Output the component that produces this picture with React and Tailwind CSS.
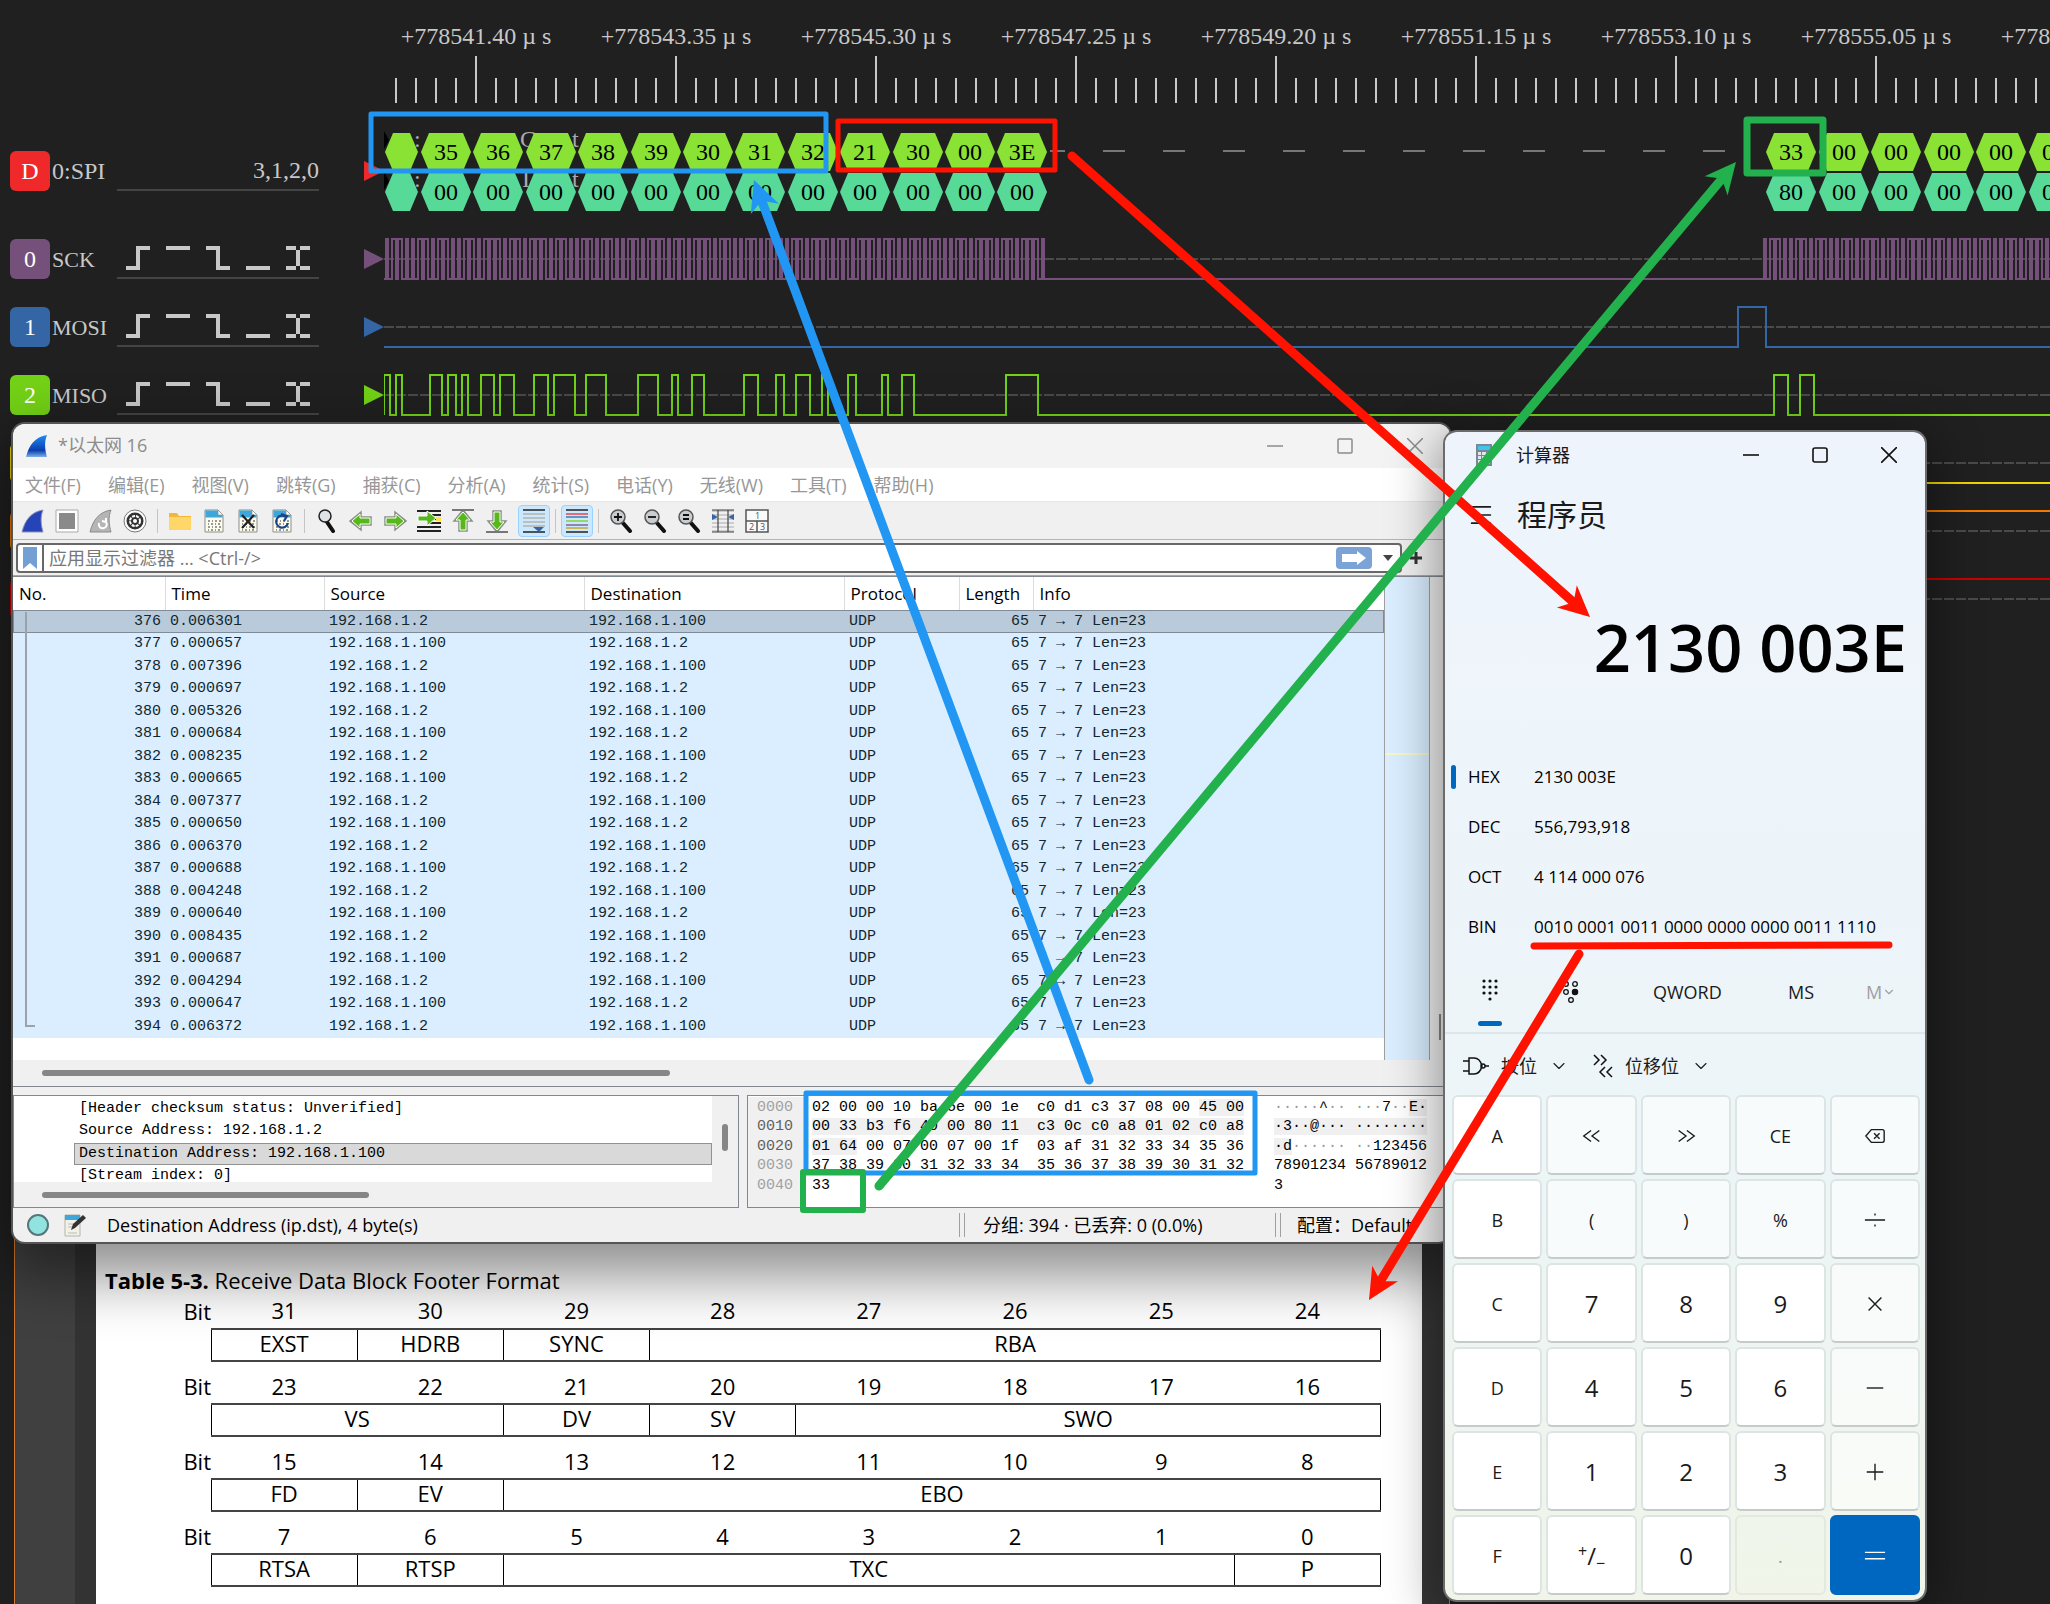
import { Fragment } from 'react';
import { ChevronDown, Menu } from 'lucide-react';

const uiFont = "[font-family:'Open_Sans','Noto_Sans_CJK_SC',sans-serif]";
const monoFont = "[font-family:'Liberation_Mono',monospace]";
const serifFont = "[font-family:'Liberation_Serif','Noto_Sans_CJK_SC',serif]";

// ---------- Logic analyzer ----------

const rulerLabels = ['+778541.40', '+778543.35', '+778545.30', '+778547.25', '+778549.20', '+778551.15', '+778553.10', '+778555.05', '+778557.00'];

const misoPulses = [
  [0, 6], [12, 18], [46, 58], [64, 72], [78, 84], [97, 110], [116, 130], [150, 164], [170, 191], [202, 222],
  [254, 274], [288, 294], [308, 320], [360, 374], [392, 400], [412, 426], [438, 444], [464, 472], [498, 504],
  [518, 530], [622, 654], [1390, 1404], [1416, 1430],
];

// clock edges snap to the 2px sample grid
const clockEdge = (start, k) => start + 2 * Math.floor(k * 1.64 + 0.23);
const clockPulses = (start, count) =>
  Array.from({ length: count }, (_, i) => [clockEdge(start, i * 2), clockEdge(start, i * 2 + 1)]);

const sckPulses = [...clockPulses(2, 101), ...clockPulses(1380, 60)];

const channels = [
  { id: '0', name: 'SCK', badge: 'bg-[#75507b]', color: '#75507b', pulses: sckPulses },
  { id: '1', name: 'MOSI', badge: 'bg-[#3465a4]', color: '#3465a4', pulses: [[1354, 1382]] },
  { id: '2', name: 'MISO', badge: 'bg-[#73d216]', color: '#73d216', pulses: misoPulses },
  { badge: 'bg-[#edd400]', color: '#edd400', pulses: [] },
  { badge: 'bg-[#f57900]', color: '#f57900', pulses: [[-4, 4000]] },
  { badge: 'bg-[#cc0000]', color: '#cc0000', pulses: [[-4, 4000]] },
];

const triggers = [
  { label: 'Rising edge', d: 'M0 22h14M12 24V0M10 2h14' },
  { label: 'High level', d: 'M0 2h24' },
  { label: 'Falling edge', d: 'M0 2h14M12 0v24M10 22h14' },
  { label: 'Low level', d: 'M0 22h24' },
  { label: 'Any edge', d: 'M0 2h10M14 2h10M12 4v16M0 22h10M14 22h10' },
];

const wavePath = (pulses) => {
  let d = 'M0 54';
  pulses.forEach(([a, b]) => {
    d += `H${a}V14H${b}V54`;
  });
  return d + 'H4000';
};

const firstBurst = ['35', '36', '37', '38', '39', '30', '31', '32', '21', '30', '00', '3E'];
const decoded = [
  ...firstBurst.map((v, i) => ({ x: 37 + Math.round(i * 52.4), mosi: v, miso: '00' })),
  ...['33', '00', '00', '00', '00', '00'].map((v, i) => ({
    x: 1382 + Math.round(i * 52.5),
    mosi: v,
    miso: i === 0 ? '80' : '00',
  })),
];

const Hexagon = ({ x, y, w = 50, fill, text }) => (
  <>
    <path d={`M${x} ${y + 19}l8-19h${w - 16}l8 19l-8 19h-${w - 16}z`} fill={fill} />
    {text && (
      <text x={x + w / 2} y={y + 27} textAnchor="middle" fontSize="24" fill="#000">{text}</text>
    )}
  </>
);

const Ruler = () => (
  <div className="h-[117px] overflow-hidden pt-[22px]">
    <div className="flex pl-[376px] text-2xl leading-7 text-[#c8c8c8]">
      {rulerLabels.map((label) => (
        <span key={label} className="w-[200px] shrink-0 text-center">
          {label}<span className="px-1.5">µ</span>s
        </span>
      ))}
    </div>
    <svg className="ml-96 mt-1.5 block h-[47px] w-full" stroke="#c8c8c8" strokeWidth="2">
      {Array.from({ length: 120 }, (_, i) => (
        <path key={i} d={`M${12 + i * 20} ${i % 10 === 4 ? 0 : 22}V47`} />
      ))}
    </svg>
  </div>
);

const DecoderRow = () => (
  <div className="flex h-[108px] items-center pl-2.5">
    <span className="flex size-10 items-center justify-center rounded-md bg-[#ef2929] text-2xl text-white">D</span>
    <span className="w-[67px] pl-0.5 text-2xl text-[#c8c8c8]">0:SPI</span>
    <span className="flex h-10 w-[202px] items-center justify-end border-b-2 border-[#444] text-2xl text-[#c8c8c8]">3,1,2,0</span>
    <svg className="ml-[45px] h-5 w-5 shrink-0"><path d="M0 0l20 10L0 20z" fill="#ef2929" /></svg>
    <svg className="h-full min-w-0 flex-1">
      <path d="M0 14l5 9-5 9zM0 55l5 9-5 9z" fill="#000" />
      <g fontSize="24" fill="#aaa">
        <text x="30" y="30">:</text><text x="136" y="30">C</text><text x="188" y="30">t</text>
        <text x="30" y="70">:</text><text x="138" y="70">I</text><text x="188" y="70">t</text>
      </g>
      <path d="M666 34h15" stroke="#777" strokeWidth="2" />
      <path d="M719 34H1360" stroke="#777" strokeWidth="2" strokeDasharray="22 38" />
      <Hexagon x={1} y={16} w={33} fill="#8ae234" />
      <Hexagon x={1} y={56} w={33} fill="#57d998" />
      {decoded.map((item) => (
        <Fragment key={item.x}>
          <Hexagon x={item.x} y={16} fill="#8ae234" text={item.mosi} />
          <Hexagon x={item.x} y={56} fill="#57d998" text={item.miso} />
        </Fragment>
      ))}
    </svg>
  </div>
);

const ChannelRow = ({ channel }) => (
  <div className="flex h-[68px] items-center pl-2.5">
    <span className={`flex size-10 items-center justify-center rounded-md text-2xl text-white ${channel.badge}`}>{channel.id}</span>
    <span className="w-[67px] pl-0.5 text-[22px] text-[#c8c8c8]">{channel.name}</span>
    <div className="flex h-10 w-[202px] items-center gap-4 border-b-2 border-[#444] pl-[9px]">
      {triggers.map((t) => (
        <button key={t.label} aria-label={t.label} className="size-6 shrink-0">
          <svg className="size-6" stroke="#c8c8c8" strokeWidth="4" fill="none"><path d={t.d} /></svg>
        </button>
      ))}
    </div>
    <svg className="ml-[45px] h-5 w-5 shrink-0"><path d="M0 0l20 10L0 20z" fill={channel.color} /></svg>
    <svg className="h-full min-w-0 flex-1" fill="none" strokeWidth="2">
      <path d="M0 34H4000" stroke="#4a4a4a" strokeDasharray="10 2" />
      <path d={wavePath(channel.pulses)} stroke={channel.color} shapeRendering="crispEdges" />
    </svg>
  </div>
);

const LogicAnalyzer = () => (
  <section className={`overflow-hidden ${serifFont}`}>
    <Ruler />
    <DecoderRow />
    {channels.map((c) => <ChannelRow key={c.color} channel={c} />)}
  </section>
);

// ---------- Datasheet page ----------

const bitRows = [
  { high: 31, fields: [['EXST', 1], ['HDRB', 1], ['SYNC', 1], ['RBA', 5]] },
  { high: 23, fields: [['VS', 2], ['DV', 1], ['SV', 1], ['SWO', 4]] },
  { high: 15, fields: [['FD', 1], ['EV', 1], ['EBO', 6]] },
  { high: 7, fields: [['RTSA', 1], ['RTSP', 1], ['TXC', 5], ['P', 1]] },
];

const Datasheet = () => (
  <section className={`absolute left-3.5 top-[1100px] flex h-[510px] w-[1436px] border-x border-[#d9772b] bg-[#404040] ${uiFont}`}>
    <div className="ml-[60px] w-[21px] bg-[#333]" />
    <div className="flex-1 bg-white pr-[41px] pt-[164px] text-black">
      <h2 className="pl-[9px] text-[22px] leading-8"><b>Table 5-3.</b> Receive Data Block Footer Format</h2>
      <table className="-mt-2.5 w-full table-fixed border-collapse text-center text-[22px] leading-7">
        <colgroup>
          <col className="w-[115px]" />
        </colgroup>
        <tbody>
          {bitRows.map((row) => (
            <Fragment key={row.high}>
              <tr className="h-[43px]">
                <th className="p-0 pt-1.5 text-right font-normal">Bit</th>
                {Array.from({ length: 8 }, (_, i) => <td key={i} className="p-0 pt-1.5">{row.high - i}</td>)}
              </tr>
              <tr className="h-8">
                <td />
                {row.fields.map(([name, span]) => (
                  <td key={name} colSpan={span} className="border border-y-2 border-x-black border-y-[#444] p-0 pb-1 leading-6">{name}</td>
                ))}
              </tr>
            </Fragment>
          ))}
        </tbody>
      </table>
    </div>
    <div className="w-[27px] bg-[#363636]" />
  </section>
);

// ---------- Wireshark ----------

const menus = ['文件(F)', '编辑(E)', '视图(V)', '跳转(G)', '捕获(C)', '分析(A)', '统计(S)', '电话(Y)', '无线(W)', '工具(T)', '帮助(H)'];

const times = [
  '0.006301', '0.000657', '0.007396', '0.000697', '0.005326', '0.000684', '0.008235', '0.000665', '0.007377', '0.000650',
  '0.006370', '0.000688', '0.004248', '0.000640', '0.008435', '0.000687', '0.004294', '0.000647', '0.006372',
];
const packets = times.map((time, i) => ({
  no: 376 + i,
  time,
  source: i % 2 ? '192.168.1.100' : '192.168.1.2',
  destination: i % 2 ? '192.168.1.2' : '192.168.1.100',
}));

const Icon = ({ children }) => (
  <svg viewBox="0 0 24 24" className="size-6" fill="none">{children}</svg>
);

const FileIcon = ({ children }) => (
  <Icon>
    <path d="M3 1h13l5 5v17H3z" fill="#fdfcec" stroke="#8b8f8b" />
    <path d="M3.500 1.500h12.500v4h4.500v3H3.500z" fill="#3ba7dd" />
    <path d="M16 1v5h5z" fill="#fff" stroke="#8b8f8b" strokeWidth=".7" />
    {children}
  </Icon>
);

const Bits = () => (
  <path d="M6 12h2m2 0h1m2 0h2m2 0h2M6 15h1m2 0h2m2 0h1m2 0h2M6 18h2m2 0h1m2 0h2m2 0h2M6 21h1m2 0h2m2 0h1m2 0h2" stroke="#777" strokeWidth="1.500" />
);

const ArrowIcon = ({ turn, children }) => (
  <Icon>
    <path d="M1 12l11-9v5h10v8H12v5z" transform={`rotate(${turn} 12 12)`} fill="#57b81c" stroke="#8a8f88" strokeWidth="1.500" />
    <path d="M3 12l8-7v4h10v6H11v4z" transform={`rotate(${turn} 12 12)`} fill="#57b81c" stroke="#fff" strokeWidth="1" />
    {children}
  </Icon>
);

const Lens = ({ children }) => (
  <Icon>
    <path d="M14 14l7 8" stroke="#111" strokeWidth="4" strokeLinecap="round" />
    <circle cx="9" cy="8" r="7" fill="#c9cdcf" stroke="#555" strokeWidth="1.500" />
    <path d={children} stroke="#111" strokeWidth="1.800" />
  </Icon>
);

const finPath = 'M1 23C4 11 10 3 22 1c-3 7-2 15 0 22z';

const toolGroups = [
  [
    ['开始捕获', <Icon><path d={finPath} fill="#2743b8" stroke="#8b93b8" /></Icon>],
    ['停止捕获', <Icon><path d="M1 1h22v22H1z" fill="#fff" stroke="#aaa" /><path d="M4 4h16v16H4z" fill="#8a8a8a" /></Icon>],
    ['重新捕获', <Icon><path d={finPath} fill="#b5b5b5" stroke="#8b8b8b" /><path d="M10 14a4 4 0 1 0 7-1l-4-1m4-3v5" stroke="#fff" strokeWidth="2" /></Icon>],
    ['捕获选项', <Icon><circle cx="12" cy="12" r="11" fill="#fff" stroke="#777" /><circle cx="12" cy="12" r="8.500" fill="#333" /><circle cx="12" cy="12" r="5" stroke="#fff" strokeWidth="2" strokeDasharray="3 1" /><circle cx="12" cy="12" r="2" fill="#fff" /></Icon>],
  ],
  [
    ['打开', <Icon><path d="M1 4h8l2 3h12v14H1z" fill="#f4b73b" /><path d="M1 8h22v13H1z" fill="#ffd668" /></Icon>],
    ['保存', <FileIcon><Bits /></FileIcon>],
    ['关闭', <FileIcon><Bits /><path d="M6 6l12 13M18 6L6 19" stroke="#222" strokeWidth="2.200" /></FileIcon>],
    ['重新加载', <FileIcon><Bits /><path d="M16 8a6 6 0 1 0 2 6M11 5l6 2-3 5" stroke="#1c4587" strokeWidth="2.200" /></FileIcon>],
  ],
  [
    ['查找', <Icon><path d="M12 13l6 9" stroke="#111" strokeWidth="4" strokeLinecap="round" /><circle cx="10" cy="7" r="6" fill="#dfe3e5" stroke="#222" strokeWidth="1.500" /></Icon>],
    ['后退', <ArrowIcon turn="0" />],
    ['前进', <ArrowIcon turn="180" />],
    ['转到', <Icon><path d="M0 2h24M10 6h14M12 10h12M10 14h14M0 18h24M0 22h24" stroke="#222" strokeWidth="2" /><path d="M1 7h9V2l9 7-9 8v-5H1z" fill="#57b81c" stroke="#fff" /><path d="M19 8h5v4h-5z" fill="#ffe14d" /></Icon>],
    ['首个分组', <ArrowIcon turn="90"><path d="M1 1h22" stroke="#777" strokeWidth="2" /></ArrowIcon>],
    ['最新分组', <ArrowIcon turn="270"><path d="M1 23h22" stroke="#777" strokeWidth="2" /></ArrowIcon>],
  ],
];

const zoomTools = [
  ['放大', <Lens>M5 8h8M9 4v8</Lens>],
  ['缩小', <Lens>M5 8h8</Lens>],
  ['普通大小', <Lens>M6 6h6M6 10h6</Lens>],
  ['调整列宽', <Icon><path d="M1 2h22M1 6h22M1 10h22M1 14h22M1 18h22M1 22h22" stroke="#aaa" /><path d="M1 1h22M1 23h22M7 1v22M17 1v22" stroke="#444" strokeWidth="1.200" /><path d="M1 5l6 3-6 3zM23 5l-6 3 6 3z" fill="#3465a4" /></Icon>],
  ['布局', <Icon><path d="M1 1h22v22H1zM1 12h22M12 12v11" fill="#fafafa" stroke="#555" strokeWidth="1.500" /><g fontSize="9" fill="#555"><text x="10" y="10">1</text><text x="4" y="21">2</text><text x="15" y="21">3</text></g></Icon>],
];

const ToolButton = ({ tool }) => (
  <button aria-label={tool[0]} className="flex w-[34px] items-center justify-center">{tool[1]}</button>
);

const ToolSeparator = () => <span className="mx-[5px] h-6 w-px bg-[#c4c4c4]" />;

const Toolbar = () => (
  <div className="flex h-[38px] items-center border-b border-[#b4b4b4] bg-[#f0f0f0] pl-[3px]">
    {toolGroups.map((group, i) => (
      <Fragment key={i}>
        {group.map((tool) => <ToolButton key={tool[0]} tool={tool} />)}
        {i < 2 && <ToolSeparator />}
      </Fragment>
    ))}
    <button aria-label="自动滚动" className="ml-1 flex size-8 items-center justify-center rounded-sm border border-[#99d1ff] bg-[#cce8ff]">
      <Icon><path d="M1 5h22M1 9h22M1 13h22M1 17h22" stroke="#b3b3a8" strokeWidth="1.500" /><path d="M1 1h22M1 23h22" stroke="#222" strokeWidth="1.500" /><path d="M11 18h11l-5 5z" fill="#3465a4" /></Icon>
    </button>
    <ToolSeparator />
    <button aria-label="着色" className="flex size-8 items-center justify-center rounded-sm border border-[#99d1ff] bg-[#cce8ff]">
      <svg viewBox="0 0 24 24" className="size-6" strokeWidth="1.300">
        <path d="M1 1h22M1 23h22" stroke="#222" />
        <path d="M1 5h22" stroke="#ef2929" />
        <path d="M1 8h22" stroke="#3465a4" />
        <path d="M1 12h22" stroke="#73d216" />
        <path d="M1 16h22" stroke="#75507b" />
        <path d="M1 19h22" stroke="#c4a000" />
      </svg>
    </button>
    <ToolSeparator />
    {zoomTools.map((tool) => <ToolButton key={tool[0]} tool={tool} />)}
  </div>
);

const DisplayFilter = () => (
  <div className="flex h-9 items-center border-b border-[#a8a8a8] bg-[#f0f0f0] pl-[3px]">
    <div className="flex h-[30px] w-[1386px] items-center rounded border-2 border-[#686868] bg-white">
      <button aria-label="书签" className="flex h-full w-[26px] items-center justify-center border-r-2 border-[#686868]">
        <svg className="h-[22px] w-3.5"><path d="M0 0h14v22l-7-6-7 6z" fill="#739fd4" /></svg>
      </button>
      <input aria-label="显示过滤器" placeholder="应用显示过滤器 … <Ctrl-/>" className="h-full min-w-0 flex-1 pl-[5px] text-lg outline-none placeholder:text-[#777]" />
      <button aria-label="应用" className="flex h-[22px] w-9 items-center justify-center rounded-sm bg-[#7ba3d6]">
        <svg className="h-3.5 w-6"><path d="M0 3h15V0l9 7-9 7v-3H0z" fill="#fff" /></svg>
      </button>
      <button aria-label="历史" className="flex w-7 justify-center pl-1">
        <svg className="h-1.5 w-2.5"><path d="M0 0h10L5 6z" fill="#444" /></svg>
      </button>
    </div>
    <button aria-label="添加" className="ml-2 size-3">
      <svg className="size-3" stroke="#333" strokeWidth="3"><path d="M0 6h12M6 0v12" /></svg>
    </button>
  </div>
);

const PacketTable = () => (
  <div className="border-y border-[#828790]">
    <div className="flex">
      <div className="relative min-w-0 flex-1 bg-white pb-[22px]">
        <table className="w-full table-fixed border-collapse text-left">
          <colgroup>
            <col className="w-[152px]" />
            <col className="w-[159px]" />
            <col className="w-[260px]" />
            <col className="w-[260px]" />
            <col className="w-[115px]" />
            <col className="w-[74px]" />
            <col />
          </colgroup>
          <thead>
            <tr className="h-[33px] text-[17px] leading-6">
              {['No.', 'Time', 'Source', 'Destination', 'Protocol', 'Length', 'Info'].map((h) => (
                <th key={h} className="border-r border-[#dcdcdc] py-0 pl-1.5 pr-0 font-normal text-black last:border-r-0">{h}</th>
              ))}
            </tr>
          </thead>
          <tbody className={`text-[15px] leading-5 text-[#12272e] ${monoFont}`}>
            {packets.map((p, i) => (
              <tr key={p.no} className={`odd:h-[23px] even:h-[22px] ${i === 0 ? 'bg-[#b9cbda] outline outline-[#7f8c98] -outline-offset-1' : 'bg-[#daeeff]'}`}>
                <td className="p-0 pr-1 text-right">{p.no}</td>
                <td className="p-0 pl-[5px]">{p.time}</td>
                <td className="p-0 pl-[5px]">{p.source}</td>
                <td className="p-0 pl-[5px]">{p.destination}</td>
                <td className="p-0 pl-[5px]">UDP</td>
                <td className="p-0 pr-1 text-right">65</td>
                <td className="p-0 pl-[5px]">7 → 7 Len=23</td>
              </tr>
            ))}
          </tbody>
        </table>
        {/* conversation bracket */}
        <span className="absolute left-3 top-[35px] h-[415px] w-2.5 border-b-2 border-l-2 border-[#9aa3ab]" />
      </div>
      <div className="w-[46px] border-x border-[#a0a0a0] bg-[#daeeff] pt-[176px]">
        <div className="h-0.5 bg-[#f7f7c8]" />
      </div>
      <div className="flex w-5 items-end justify-center bg-[#f0f0f0] pb-5">
        <span className="h-[26px] w-0.5 bg-[#868686]" />
      </div>
    </div>
    <div className="h-[26px] bg-[#f0f0f0] pl-[29px] pt-2.5">
      <div className="h-1.5 w-[628px] rounded-full bg-[#868686]" />
    </div>
  </div>
);

const details = ['[Header checksum status: Unverified]', 'Source Address: 192.168.1.2', 'Destination Address: 192.168.1.100', '[Stream index: 0]'];

const PacketDetails = () => (
  <div className="h-[113px] w-[726px] border border-[#828790] bg-[#f0f0f0]">
    <div className="flex">
      <ul className={`h-[86px] flex-1 overflow-hidden bg-white pl-[60px] pt-0.5 text-[15px] leading-5 text-black ${monoFont}`}>
        {details.map((line, i) => (
          <li key={line} className={`border pl-1 odd:h-[22px] even:h-[23px] ${i === 2 ? 'border-[#919191] bg-[#d9d9d9]' : 'border-transparent'}`}>{line}</li>
        ))}
      </ul>
      <div className="flex w-[26px] justify-center pt-7">
        <div className="h-[27px] w-1.5 rounded-full bg-[#868686]" />
      </div>
    </div>
    <div className="pl-7 pt-2.5">
      <div className="h-1.5 w-[327px] rounded-full bg-[#868686]" />
    </div>
  </div>
);

const hexRows = [
  { offset: '0000', hex: ['02 00 00 10 ba 5e 00 1e  c0 d1 c3 37 08 00 ', '45 00', ''], ascii: [['·····', 0], ['^', 1], ['·· ···', 0], ['7', 1], ['··', 0], ['E·', 2]] },
  { offset: '0010', lit: true, hex: ['', '00 33 b3 f6 40 00 80 11  c3 0c c0 a8 01 02 c0 a8', ''], ascii: [['·3··@··· ········', 2]] },
  { offset: '0020', lit: true, hex: ['', '01 64', ' 00 07 00 07 00 1f  03 af 31 32 33 34 35 36'], ascii: [['·d', 2], ['······ ··', 0], ['123456', 1]] },
  { offset: '0030', hex: ['37 38 39 30 31 32 33 34  35 36 37 38 39 30 31 32', '', ''], ascii: [['78901234 56789012', 1]] },
  { offset: '0040', hex: ['33', '', ''], ascii: [['3', 1]] },
];
const asciiStyles = ['text-[#999]', 'text-black', 'bg-[#f0f0f0] text-black'];

const HexPane = () => (
  <div className={`flex-1 border border-r-0 border-[#828790] bg-white pt-px text-[15px] leading-5 text-black ${monoFont}`}>
    <table className="h-full w-full border-collapse whitespace-pre">
      <tbody>
        {hexRows.map((row) => (
          <tr key={row.offset} className="odd:h-5 even:h-[19px]">
            <th className={`w-[58px] bg-[#f0f0f0] p-0 pl-[9px] text-left font-normal leading-[19px] ${row.lit ? 'text-[#606060]' : 'text-[#a0a0a0]'}`}>{row.offset}</th>
            <td className="w-[463px] p-0 pl-1.5 leading-[19px]">
              {row.hex[0]}<span className="bg-[#f0f0f0]">{row.hex[1]}</span>{row.hex[2]}
            </td>
            <td className="p-0 pl-[5px] leading-[19px]">
              {row.ascii.map(([text, style]) => <span key={text} className={asciiStyles[style]}>{text}</span>)}
            </td>
          </tr>
        ))}
        <tr><th className="bg-[#f0f0f0] p-0" /><td className="p-0" /><td className="p-0" /></tr>
      </tbody>
    </table>
  </div>
);

const StatusDivider = () => <span className="h-6 w-1.5 shrink-0 border-x border-[#a0a0a0]" />;

const StatusBar = () => (
  <footer className="flex h-[34px] items-center pl-3.5 text-lg text-black">
    <button aria-label="专家信息" className="size-[22px] shrink-0 rounded-full border-2 border-[#53777c] bg-[#91e3df]" />
    <button aria-label="注释" className="ml-3.5 size-6 shrink-0">
      <Icon>
        <path d="M2 2h15v21H2z" fill="#f2f1e6" stroke="#b5b5ab" />
        <path d="M2 2h15v5H2z" fill="#3ba7dd" />
        <path d="M5 11h8M5 14h5M5 20h9" stroke="#bbb" />
        <path d="M8 17l2-6L20 2l3 3L12 15z" fill="#333" />
      </Icon>
    </button>
    <span className="w-[872px] shrink-0 pl-5">Destination Address (ip.dst), 4 byte(s)</span>
    <StatusDivider />
    <span className="w-[310px] shrink-0 pl-[18px]">分组: 394 · 已丢弃: 0 (0.0%)</span>
    <StatusDivider />
    <span className="whitespace-nowrap pl-4">配置：Default</span>
  </footer>
);

const Wireshark = () => (
  <section className={`absolute left-[13px] top-[424px] w-[1437px] overflow-hidden rounded-xl bg-[#f0f0f0] shadow-[0_0_0_2px_#555,0_24px_60px_10px_rgba(0,0,0,0.45)] ${uiFont}`}>
    <header className="flex h-11 items-center bg-[#f3f3f3] pl-3 text-lg text-[#8c8c8c]">
      <svg viewBox="0 0 24 24" className="size-6">
        <defs>
          <linearGradient id="fin" x1="0" y1="0" x2="0" y2="1">
            <stop offset="0" stopColor="#1e8cf0" />
            <stop offset=".7" stopColor="#0a3fae" />
            <stop offset="1" stopColor="#7fb0e6" />
          </linearGradient>
        </defs>
        <path d={finPath} fill="url(#fin)" />
      </svg>
      <h1 className="flex-1 pb-0.5 pl-[9px]">*以太网 16</h1>
      <div className="flex gap-[54px] pr-[27px]">
        {['M0 8h16', 'M2 1h12q1 0 1 1v12q0 1-1 1h-12q-1 0-1-1v-12q0-1 1-1z', 'M0 0l16 16M16 0L0 16'].map((d, i) => (
          <button key={d} aria-label={['最小化', '最大化', '关闭'][i]} className="size-4">
            <svg className="size-4" fill="none" stroke="#8c8c8c" strokeWidth="1.500"><path d={d} /></svg>
          </button>
        ))}
      </div>
    </header>
    <nav className="flex h-[34px] items-center gap-[27px] border-b border-[#e6e6e6] bg-white pl-3 text-lg text-[#979797]">
      {menus.map((m) => <button key={m}>{m}</button>)}
    </nav>
    <Toolbar />
    <DisplayFilter />
    <PacketTable />
    <div className="mt-2 flex gap-2">
      <PacketDetails />
      <HexPane />
    </div>
    <StatusBar />
  </section>
);

// ---------- Calculator ----------

const bases = [
  ['HEX', '2130 003E'],
  ['DEC', '556,793,918'],
  ['OCT', '4 114 000 076'],
  ['BIN', '0010 0001 0011 0000 0000 0000 0011 1110'],
];

const glyphs = {
  '«': 'M11 6l-8 6 8 6M20 6l-8 6 8 6',
  '»': 'M4 6l8 6-8 6M13 6l8 6-8 6',
  '⌫': 'M8 5h12q2 0 2 2v10q0 2-2 2H8l-6-7zM11 9l6 6M17 9l-6 6',
  '÷': 'M1 12h22M12 5v2M12 17v2',
  '×': 'M5 5l14 14M19 5L5 19',
  '−': 'M3 12h18',
  '+': 'M3 12h18M12 3v18',
  '=': 'M1 8h22M1 15h22',
};

const keys = [
  'A', '«', '»', 'CE', '⌫',
  'B', '(', ')', '%', '÷',
  'C', '7', '8', '9', '×',
  'D', '4', '5', '6', '−',
  'E', '1', '2', '3', '+',
  'F', '+/-', '0', '.', '=',
];

const keyStyle = (key) => {
  if (key === '=') return 'bg-[#0067c0] border-[#0067c0] text-white';
  if (key === '.') return 'bg-transparent border-[#e3e9de] text-[#999] text-lg';
  if (/^\d$/.test(key)) return 'bg-white border-[#dde5e4] border-b-[#c5cbca] text-[#1a1a1a] text-2xl';
  if (/^[A-F]$/.test(key)) return 'bg-white border-[#dde5e4] border-b-[#c5cbca] text-[#1a1a1a] text-lg';
  if (key === '+/-') return 'bg-white border-[#dde5e4] border-b-[#c5cbca] text-[#1a1a1a] text-2xl';
  return 'bg-white/60 border-[#dde5e4] border-b-[#c5cbca] text-[#1a1a1a] text-lg';
};

const Key = ({ value }) => (
  <button aria-label={value} className={`flex h-20 items-center justify-center rounded-md border-2 pt-0.5 ${keyStyle(value)}`}>
    {value === '+/-' ? (
      <span><sup className="text-base">+</sup>/<sub className="text-base">−</sub></span>
    ) : glyphs[value] ? (
      <svg viewBox="0 0 24 24" className="size-[22px]" fill="none" stroke="currentColor" strokeWidth="1.500"><path d={glyphs[value]} /></svg>
    ) : (
      value
    )}
  </button>
);

const Calculator = () => (
  <section className={`absolute left-[1445px] top-[432px] w-[480px] rounded-xl bg-linear-to-b from-[#eff4fc] via-[#ecf5f8] via-60% to-[#f1f5e9] pb-[5px] text-[#1a1a1a] shadow-[0_0_0_2px_#6b6b6b,0_10px_50px_8px_rgba(0,0,0,0.4)] ${uiFont}`}>
    <header className="flex h-[46px] items-center pl-[31px] text-lg">
      <svg viewBox="0 0 16 22" className="h-[22px] w-4">
        <path d="M0 0h16v22H0z" fill="#7b8794" />
        <path d="M2 2h12v4H2z" fill="#3fc4ee" />
        <path d="M2 8h3v3H2zM6 8h4v3H6zM11 8h3v3h-3zM2 12h3v3H2zM6 12h4v3H6zM11 12h3v3h-3zM2 16h3v4H2zM6 16h4v4H6zM11 16h3v4h-3z" fill="#e2e7eb" />
      </svg>
      <h1 className="flex-1 pl-6">计算器</h1>
      <div className="flex gap-[53px] pr-7">
        {['M0 8h16', 'M3 1h10q2 0 2 2v10q0 2-2 2h-10q-2 0-2-2v-10q0-2 2-2z', 'M0 0l16 16M16 0L0 16'].map((d, i) => (
          <button key={d} aria-label={['最小化', '最大化', '关闭'][i]} className="size-4">
            <svg className="size-4" fill="none" stroke="#111" strokeWidth="1.600"><path d={d} /></svg>
          </button>
        ))}
      </div>
    </header>
    <div className="flex h-[74px] items-center pl-[22px]">
      <button aria-label="导航"><Menu className="size-7" strokeWidth={1.5} /></button>
      <h2 className="pl-[22px] text-3xl">程序员</h2>
    </div>
    <output className="flex h-[200px] items-center justify-end pb-2 pr-[18px] text-[65px] font-semibold text-black">2130 003E</output>
    {bases.map(([name, value]) => (
      <button key={name} className="flex h-[50px] w-full items-center pl-1.5 text-left text-[17px] text-black">
        <span className={`h-6 w-[5px] rounded-full ${name === 'HEX' ? 'bg-[#0067c0]' : ''}`} />
        <span className="ml-3 w-[66px]">{name}</span>
        <span>{value}</span>
      </button>
    ))}
    <div className="flex h-[82px] items-center border-b-2 border-[#dde6ea] text-lg">
      <button aria-label="全键盘" className="ml-[33px] flex h-full w-6 flex-col items-center justify-end gap-[18px] pb-1.5">
        <svg viewBox="0 0 16 24" className="h-6 w-4" fill="#111">
          {[2, 8, 14].map((x) => [2, 8, 14].map((y) => <circle key={`${x}-${y}`} cx={x} cy={y} r="1.600" />))}
          <circle cx="8" cy="20" r="1.600" />
        </svg>
        <span className="h-[5px] w-6 rounded-full bg-[#0067c0]" />
      </button>
      <button aria-label="位切换键盘" className="ml-[56px] w-6">
        <svg viewBox="0 0 24 24" className="size-6" fill="none" stroke="#111" strokeWidth="1.300">
          <circle cx="8" cy="4" r="2.300" />
          <circle cx="17" cy="4" r="2.300" />
          <circle cx="8" cy="12" r="2.300" />
          <circle cx="17" cy="12" r="2.600" fill="#111" />
          <circle cx="13" cy="20" r="2.300" />
        </svg>
      </button>
      <button className="ml-[71px] w-[68px]">QWORD</button>
      <button className="ml-[67px]">MS</button>
      <button className="ml-[52px] flex items-center text-[#a0a0a0]">M<ChevronDown className="size-3.5" strokeWidth={2} /></button>
    </div>
    <div className="flex h-[61px] items-center pl-[18px] pt-0.5 text-lg">
      <button className="flex items-center gap-3">
        <svg viewBox="0 0 26 18" className="h-[18px] w-[26px]" fill="none" stroke="#111" strokeWidth="1.500">
          <path d="M6 1h5c5 0 7 4 8 8-1 4-3 8-8 8H6zM0 4h6M0 14h6" />
          <circle cx="20" cy="9" r="2" />
          <path d="M22 9h4" />
        </svg>
        按位
        <ChevronDown className="size-5" strokeWidth={1.3} />
      </button>
      <button className="ml-6 flex items-center gap-3">
        <svg viewBox="0 0 20 24" className="h-6 w-5" fill="none" stroke="#111" strokeWidth="1.500">
          <path d="M1 1l5 5-5 5M8 1l5 5-5 5M12 13l-5 5 5 5M19 13l-5 5 5 5" />
        </svg>
        位移位
        <ChevronDown className="size-5" strokeWidth={1.3} />
      </button>
    </div>
    <div className="grid grid-cols-5 gap-1 pl-[7px] pr-[5px]">
      {keys.map((k) => <Key key={k} value={k} />)}
    </div>
  </section>
);

// ---------- Marker drawing over the windows ----------

const BLUE = '#2196f3';
const RED = '#ff1200';
const GREEN = '#22b14c';

const Arrow = ({ from, to, color }) => {
  const length = Math.hypot(to[0] - from[0], to[1] - from[1]);
  const ux = (to[0] - from[0]) / length;
  const uy = (to[1] - from[1]) / length;
  const at = (along, side) => `${to[0] - ux * along - uy * side} ${to[1] - uy * along + ux * side}`;
  return (
    <>
      <path d={`M${from.join(' ')}L${at(22, 0)}`} stroke={color} strokeWidth="9" strokeLinecap="round" />
      <path d={`M${at(0, 0)}L${at(31, 15)}L${at(22, 0)}L${at(31, -15)}Z`} fill={color} />
    </>
  );
};

const Annotations = () => (
  <svg className="pointer-events-none absolute inset-0 h-full w-full" fill="none" strokeLinejoin="round">
    <rect x="371" y="114" width="455" height="57" stroke={BLUE} strokeWidth="5" />
    <rect x="838" y="121" width="217" height="49" stroke={RED} strokeWidth="5" />
    <rect x="1747" y="120" width="76" height="53" stroke={GREEN} strokeWidth="7" />
    <rect x="806" y="1093" width="449" height="80" stroke={BLUE} strokeWidth="5" />
    <rect x="803" y="1172" width="60" height="38" stroke={GREEN} strokeWidth="6" />
    <Arrow from={[1072, 156]} to={[1590, 617]} color={RED} />
    <Arrow from={[1089, 1080]} to={[754, 180]} color={BLUE} />
    <Arrow from={[879, 1186]} to={[1736, 162]} color={GREEN} />
    <Arrow from={[1579, 954]} to={[1369, 1300]} color={RED} />
    <path d="M1534 946L1889 945" stroke={RED} strokeWidth="7" strokeLinecap="round" />
  </svg>
);

export default function App() {
  return (
    <main className="relative min-h-screen w-full overflow-hidden bg-[#202020]">
      <LogicAnalyzer />
      <Datasheet />
      <Wireshark />
      <Calculator />
      <Annotations />
    </main>
  );
}
